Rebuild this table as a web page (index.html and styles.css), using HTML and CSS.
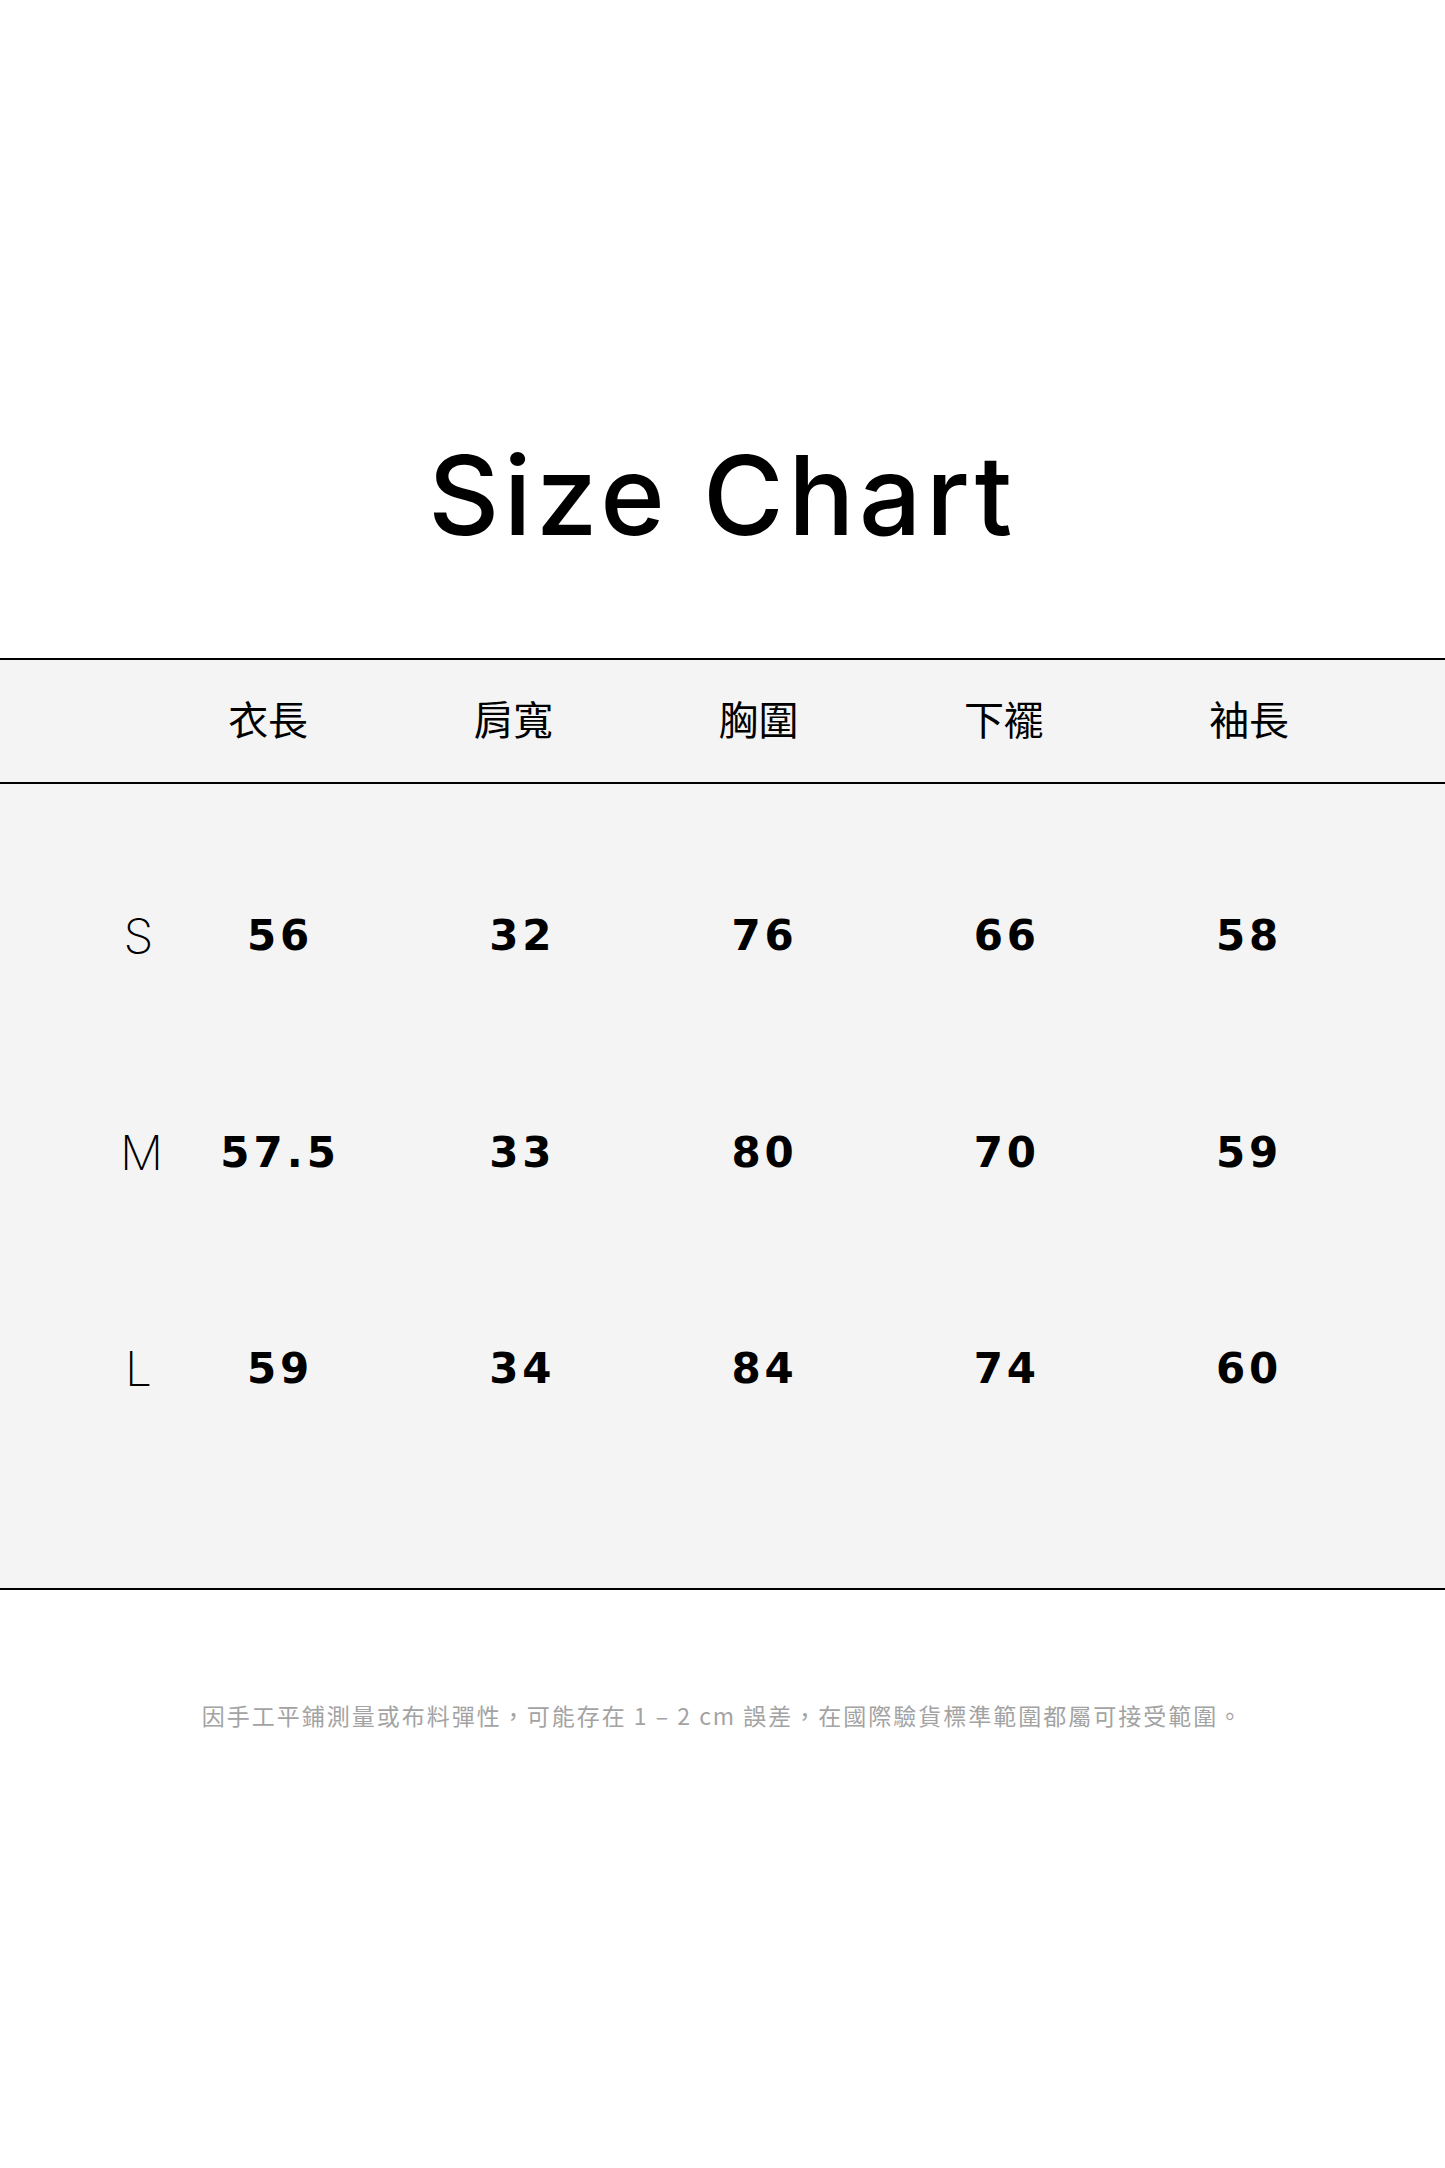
FILE: index.html
```html
<!DOCTYPE html>
<html lang="zh-Hant">
<head>
<meta charset="utf-8">
<title>Size Chart</title>
<link rel="stylesheet" href="styles.css">
</head>
<body>
<main class="page">
  <h1 class="title">Size Chart</h1>
  <section class="chart">
    <div class="head">
      <div class="head-spacer"></div>
      <div class="head-cell">衣長</div>
      <div class="head-cell">肩寬</div>
      <div class="head-cell">胸圍</div>
      <div class="head-cell">下襬</div>
      <div class="head-cell">袖長</div>
    </div>
    <div class="body">
      <div class="row">
        <div class="size">S</div>
        <div class="num">56</div>
        <div class="num">32</div>
        <div class="num">76</div>
        <div class="num">66</div>
        <div class="num">58</div>
      </div>
      <div class="row">
        <div class="size">M</div>
        <div class="num">57.5</div>
        <div class="num">33</div>
        <div class="num">80</div>
        <div class="num">70</div>
        <div class="num">59</div>
      </div>
      <div class="row">
        <div class="size">L</div>
        <div class="num">59</div>
        <div class="num">34</div>
        <div class="num">84</div>
        <div class="num">74</div>
        <div class="num">60</div>
      </div>
    </div>
  </section>
  <p class="note">因手工平鋪測量或布料彈性，可能存在 1 – 2 cm 誤差，在國際驗貨標準範圍都屬可接受範圍。</p>
</main>
</body>
</html>
```

FILE: styles.css
```css
html, body {
  margin: 0;
  padding: 0;
  background: #ffffff;
}

.page {
  width: 1445px;
  min-height: 2168px;
  display: flex;
  flex-direction: column;
}

.title {
  margin: 440px 0 0 0;
  height: 110px;
  font-family: "Inter", "Liberation Sans", sans-serif;
  font-weight: 500;
  font-size: 110px;
  line-height: 110px;
  letter-spacing: 4.5px;
  text-align: center;
  color: #000;
}

.chart {
  margin-top: 108px;
  background: #f4f4f4;
}

.head {
  display: grid;
  grid-template-columns: 145.5px repeat(5, 245.25px);
  height: 122px;
  align-items: center;
  border-top: 2px solid #000;
  border-bottom: 2px solid #000;
}

.head-cell {
  text-align: center;
  font-family: "Noto Sans CJK TC", "Noto Sans CJK SC", sans-serif;
  font-size: 40px;
  font-weight: 400;
  color: #000;
  line-height: 1;
  padding-bottom: 6px;
}

.body {
  padding: 44px 0 110px 120px;
  border-bottom: 2px solid #000;
}

.row {
  display: grid;
  grid-template-columns: 37px repeat(5, 242.25px);
  height: 216.5px;
  align-items: center;
}

.size {
  text-align: center;
  font-family: "Inter", "Liberation Sans", sans-serif;
  font-weight: 200;
  font-size: 48px;
  line-height: 1;
  color: #000;
}

.num {
  text-align: center;
  font-family: "DejaVu Sans", "Liberation Sans", sans-serif;
  font-weight: 700;
  font-size: 42px;
  line-height: 1;
  letter-spacing: 4px;
  padding-left: 4px;
  color: #000;
}

.note {
  margin: 110px 0 0 0;
  text-align: center;
  font-family: "Noto Sans CJK TC", "Noto Sans CJK SC", sans-serif;
  font-size: 23px;
  letter-spacing: 2px;
  line-height: 30px;
  color: #a3a3a3;
}
```
